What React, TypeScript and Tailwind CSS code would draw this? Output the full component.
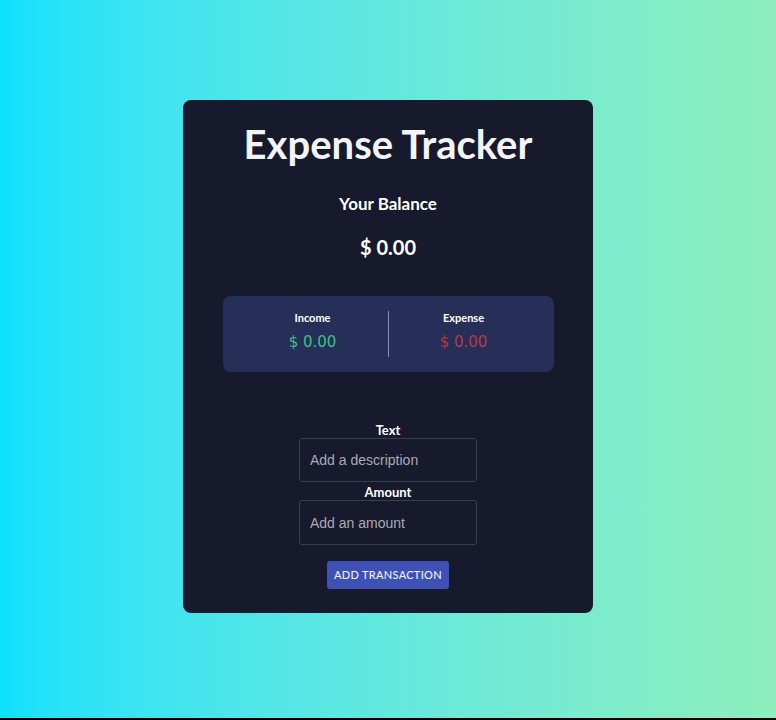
export default function App() {
  return (
    <div className="min-h-[720px] w-full bg-gradient-to-r from-[#0be1fc] to-[#8eeebd] border-b-2 border-black flex justify-center pt-[100px] font-['Lato',sans-serif]">
      <div className="w-[410px] h-[513px] bg-[#161a2c] rounded-lg flex flex-col items-center text-white">
        <h1 className="mt-[22px] text-[40px] leading-[44px] font-bold text-[#f3f4f8]">Expense Tracker</h1>
        <h2 className="mt-[28px] text-[17px] leading-[20px] font-bold">Your Balance</h2>
        <div className="mt-[21px] text-[20px] leading-[24px] font-bold">$ 0.00</div>

        <div className="mt-[37px] w-[331px] h-[76px] bg-[#252f58] rounded-lg flex items-start px-[15px]">
          <div className="flex-1 flex flex-col items-center pt-[15px]">
            <span className="text-[11px] leading-[14px] font-bold">Income</span>
            <span className="mt-[8px] text-[15px] leading-[18px] text-[#3fc08a] font-['DejaVu_Sans',sans-serif]">$ 0.00</span>
          </div>
          <div className="mt-[15px] w-px h-[46px] bg-[#8b93b0]" />
          <div className="flex-1 flex flex-col items-center pt-[15px]">
            <span className="text-[11px] leading-[14px] font-bold">Expense</span>
            <span className="mt-[8px] text-[15px] leading-[18px] text-[#b53a48] font-['DejaVu_Sans',sans-serif]">$ 0.00</span>
          </div>
        </div>

        <form className="mt-[50px] flex flex-col items-center" onSubmit={(e) => e.preventDefault()}>
          <label className="text-[13px] leading-[16px] font-bold">Text</label>
          <input
            type="text"
            placeholder="Add a description"
            className="w-[178px] h-[44px] rounded-[3px] border border-[#3a3d52] bg-transparent px-[10px] text-[14px] font-['Liberation_Sans',sans-serif] placeholder:text-[#a9abb6] outline-none"
          />
          <label className="mt-[2px] text-[13px] leading-[16px] font-bold">Amount</label>
          <input
            type="number"
            placeholder="Add an amount"
            className="w-[178px] h-[45px] rounded-[3px] border border-[#3a3d52] bg-transparent px-[10px] text-[14px] font-['Liberation_Sans',sans-serif] placeholder:text-[#a9abb6] outline-none"
          />
          <button className="mt-[16px] w-[122px] h-[28px] rounded-[3px] bg-[#3f51b5] text-[11px] tracking-[0.3px] uppercase text-[#eef0fa] font-medium">
            Add Transaction
          </button>
        </form>
      </div>
    </div>
  );
}
